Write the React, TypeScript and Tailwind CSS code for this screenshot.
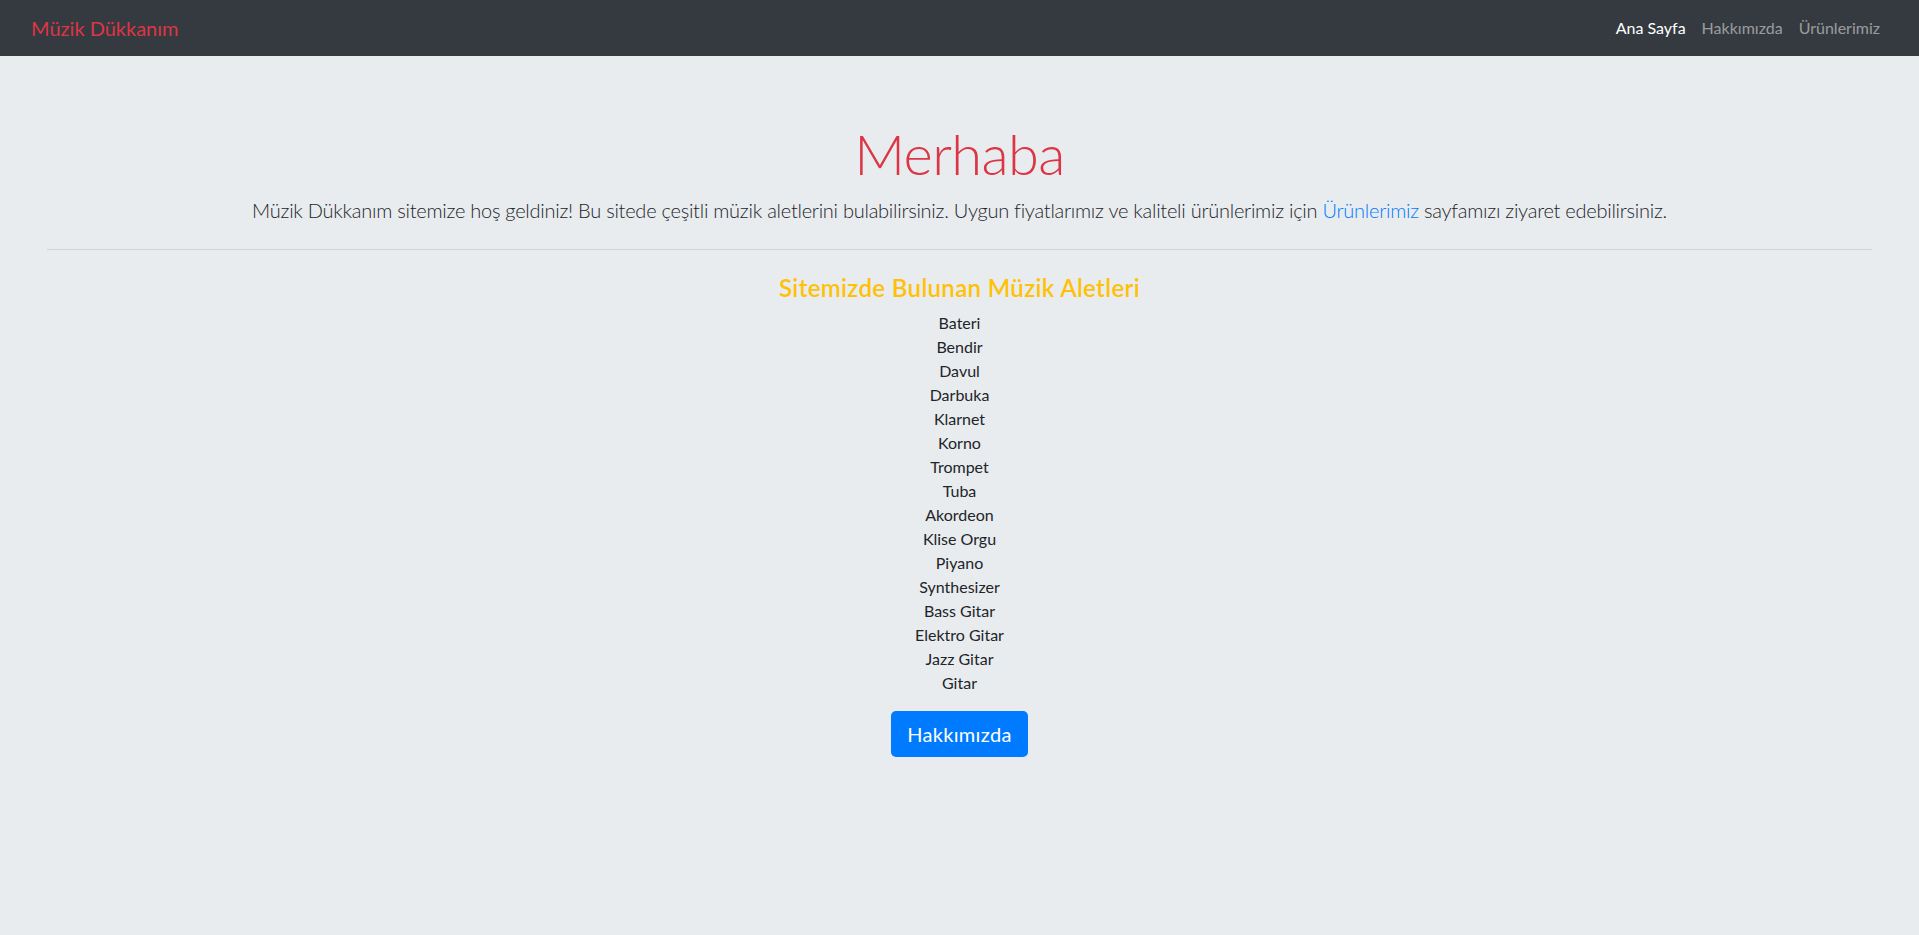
import React from 'react';

// ============================================================================
// MÜZİK DÜKKANIM - ANA SAYFA
// Dark navbar + jumbotron style welcome block with instrument list
// ============================================================================

const instruments = [
  'Bateri',
  'Bendir',
  'Davul',
  'Darbuka',
  'Klarnet',
  'Korno',
  'Trompet',
  'Tuba',
  'Akordeon',
  'Klise Orgu',
  'Piyano',
  'Synthesizer',
  'Bass Gitar',
  'Elektro Gitar',
  'Jazz Gitar',
  'Gitar',
];

const font = "font-['Lato','Noto_Sans',sans-serif]";

function Navbar() {
  const links = [
    { label: 'Ana Sayfa', active: true },
    { label: 'Hakkımızda', active: false },
    { label: 'Ürünlerimiz', active: false },
  ];

  return (
    <nav className="h-14 bg-[#343a40] flex items-center justify-between px-[31px]">
      <a href="#" className="text-[20px] text-[#dc3545] leading-[30px]">
        Müzik Dükkanım
      </a>
      <ul className="flex items-center">
        {links.map((link) => (
          <li key={link.label}>
            <a
              href="#"
              className={
                link.active
                  ? 'px-2 text-[16px] leading-6 text-white'
                  : 'px-2 text-[16px] leading-6 text-white/50'
              }
            >
              {link.label}
            </a>
          </li>
        ))}
      </ul>
    </nav>
  );
}

export default function App() {
  return (
    <div className={`min-h-[935px] bg-[#e9ecef] text-[#212529] ${font}`}>
      <Navbar />

      {/* Jumbotron */}
      <div className="px-[47px] pt-16 pb-16 text-center">
        <h1 className="text-[56px] font-light leading-[1.2] tracking-[-0.6px] text-[#dc3545] mb-2">
          Merhaba
        </h1>
        <p className="text-[20px] font-light leading-[30px] tracking-[-0.25px]">
          Müzik Dükkanım sitemize hoş geldiniz! Bu sitede çeşitli müzik aletlerini bulabilirsiniz. Uygun
          fiyatlarımız ve kaliteli ürünlerimiz için{' '}
          <a href="#" className="text-[#007bff]">
            Ürünlerimiz
          </a>{' '}
          sayfamızı ziyaret edebilirsiniz.
        </p>
        <hr className="my-6 border-t border-black/10" />

        <h4 className="text-[24px] font-semibold leading-[1.2] tracking-[0.35px] text-[#ffc107] mb-2">
          Sitemizde Bulunan Müzik Aletleri
        </h4>
        <ul className="mb-4">
          {instruments.map((name) => (
            <li key={name} className="text-[16px] leading-6">
              {name}
            </li>
          ))}
        </ul>
        <button className="bg-[#007bff] text-white text-[20px] leading-[30px] tracking-[0.3px] px-4 py-2 rounded-[5px]">
          Hakkımızda
        </button>
      </div>
    </div>
  );
}
